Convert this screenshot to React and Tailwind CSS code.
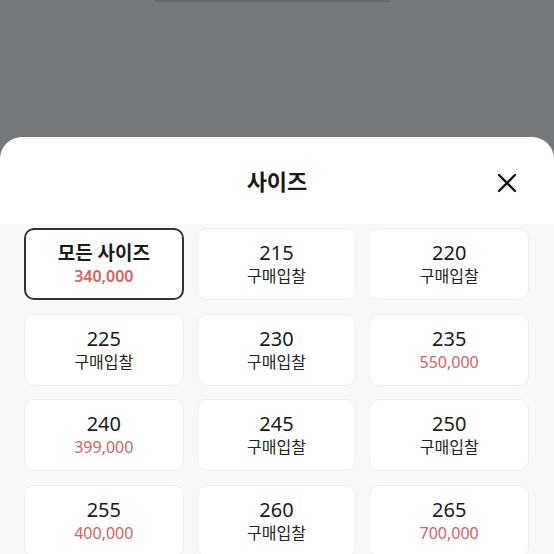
import React from "react";

const SIZES = [
  { size: "215", price: null },
  { size: "220", price: null },
  { size: "225", price: null },
  { size: "230", price: null },
  { size: "235", price: "550,000" },
  { size: "240", price: "399,000" },
  { size: "245", price: null },
  { size: "250", price: null },
  { size: "255", price: "400,000" },
  { size: "260", price: null },
  { size: "265", price: "700,000" },
];

export default function App() {
  return (
    <div
      className="w-[554px] h-[554px] overflow-hidden bg-[#76797b] flex flex-col"
      style={{ fontFamily: '"Noto Sans", "Noto Sans CJK KR", sans-serif' }}
    >
      {/* backdrop */}
      <div className="h-[137px] shrink-0 relative">
        <div className="absolute left-[155px] top-0 w-[235px] h-[2px] bg-[#4a4c4e] opacity-30" />
      </div>

      {/* sheet */}
      <div className="flex-1 bg-white rounded-t-[22px] flex flex-col overflow-hidden">
        <div className="h-[87px] shrink-0 relative flex items-center justify-center">
          <h2 className="text-[22px] font-bold text-[#1a1a1a] leading-none">사이즈</h2>
          <button className="absolute right-[36px] top-[35px] w-[22px] h-[22px] flex items-center justify-center">
            <svg width="22" height="22" viewBox="0 0 22 22" fill="none" stroke="#111" strokeWidth="2.4" strokeLinecap="round">
              <path d="M3 3 L19 19 M19 3 L3 19" />
            </svg>
          </button>
        </div>

        <div className="flex-1 bg-[#f9f9f9] pt-[4px] px-[24px] pr-[25px]">
          <div className="grid grid-cols-3 gap-x-[13px] gap-y-[13.5px]">
            <div className="h-[72px] rounded-[10px] border-2 border-[#333] bg-white flex flex-col items-center justify-center">
              <span className="text-[19px] leading-[24px] font-bold text-[#1a1a1a]">모든 사이즈</span>
              <span className="text-[16px] leading-[22px] font-semibold text-[#e0605a]">340,000</span>
            </div>
            {SIZES.map((s) => (
              <div
                key={s.size}
                className="h-[72px] rounded-[10px] border border-[#efefef] bg-white flex flex-col items-center justify-center"
              >
                <span className="text-[20px] leading-[24px] text-[#1a1a1a]">{s.size}</span>
                {s.price ? (
                  <span className="text-[16px] leading-[22px] text-[#d9605e]">{s.price}</span>
                ) : (
                  <span className="text-[16px] leading-[22px] text-[#222]">구매입찰</span>
                )}
              </div>
            ))}
          </div>
        </div>
      </div>
    </div>
  );
}
